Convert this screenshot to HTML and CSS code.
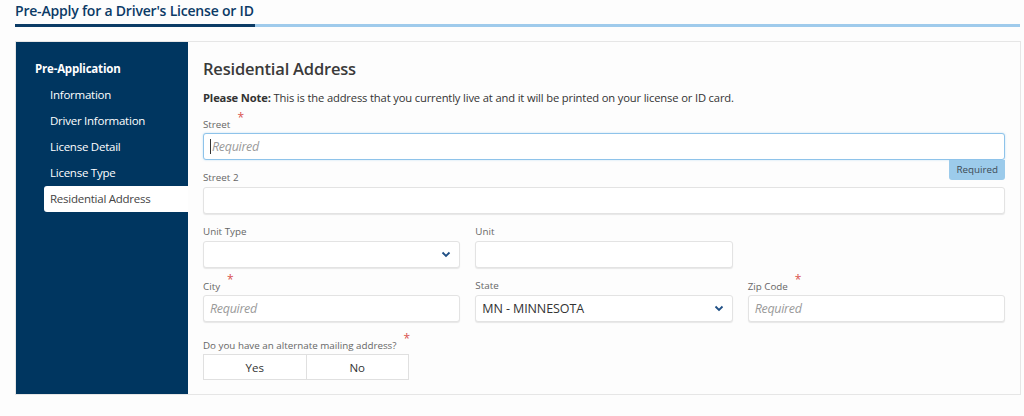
FILE: index.html
```html
<!DOCTYPE html>
<html lang="en">
<head>
<meta charset="utf-8">
<title>Pre-Apply for a Driver's License or ID</title>
<link rel="stylesheet" href="styles.css">
</head>
<body>
<header class="page-head">
  <h1 class="page-title">Pre-Apply for a Driver's License or ID</h1>
  <div class="title-rule"><span class="rule-dark"></span><span class="rule-light"></span></div>
</header>
<div class="card">
  <nav class="sidebar">
    <div class="side-group">Pre-Application</div>
    <ul class="side-list">
      <li class="side-item">Information</li>
      <li class="side-item">Driver Information</li>
      <li class="side-item">License Detail</li>
      <li class="side-item">License Type</li>
      <li class="side-item active">Residential Address</li>
    </ul>
  </nav>
  <main class="main">
    <h2 class="section-title">Residential Address</h2>
    <p class="note"><b>Please Note:</b> This is the address that you currently live at and it will be printed on your license or ID card.</p>

    <div class="field">
      <label class="label">Street<span class="req">*</span></label>
      <div class="input focused"><span class="caret"></span><span class="ph">Required</span></div>
      <span class="tip">Required</span>
    </div>

    <div class="field">
      <label class="label">Street 2</label>
      <div class="input"></div>
    </div>

    <div class="row">
      <div class="field">
        <label class="label">Unit Type</label>
        <div class="input select"><span class="val"></span>
          <svg class="chev" width="10" height="7" viewBox="0 0 10 7"><path d="M1.5 1.5 L5 5 L8.5 1.5" fill="none" stroke="#1f4f85" stroke-width="1.8"/></svg>
        </div>
      </div>
      <div class="field">
        <label class="label">Unit</label>
        <div class="input"></div>
      </div>
      <div class="field"></div>
    </div>

    <div class="row">
      <div class="field">
        <label class="label">City<span class="req">*</span></label>
        <div class="input"><span class="ph">Required</span></div>
      </div>
      <div class="field">
        <label class="label">State</label>
        <div class="input select"><span class="val">MN - MINNESOTA</span>
          <svg class="chev" width="10" height="7" viewBox="0 0 10 7"><path d="M1.5 1.5 L5 5 L8.5 1.5" fill="none" stroke="#1f4f85" stroke-width="1.8"/></svg>
        </div>
      </div>
      <div class="field">
        <label class="label">Zip Code<span class="req">*</span></label>
        <div class="input"><span class="ph">Required</span></div>
      </div>
    </div>

    <div class="field question">
      <label class="label">Do you have an alternate mailing address?<span class="req">*</span></label>
      <div class="toggle"><span class="opt">Yes</span><span class="opt">No</span></div>
    </div>
  </main>
</div>
</body>
</html>
```

FILE: styles.css
```css
* { box-sizing: border-box; }
html, body { margin: 0; padding: 0; }
body {
  background: #fdfdfd;
  font-family: "Open Sans", "Noto Sans", sans-serif;
  color: #333;
  width: 1024px;
  height: 416px;
  overflow: hidden;
}
.page-head { padding: 0 4px 0 15px; }
.page-title {
  margin: 0;
  padding-top: 1px;
  font-size: 14px;
  font-weight: 600;
  color: #0b3a66;
  line-height: 20px;
  letter-spacing: -0.2px;
}
.title-rule { display: flex; height: 3px; margin-top: 3px; }
.rule-dark { width: 240px; background: #0c3c66; }
.rule-light { flex: 1; background: #9fcbec; }

.card {
  margin: 14px 3px 0 15px;
  display: flex;
  border: 1px solid #e6e6e6;
  height: 354px;
  background: #fdfdfd;
}
.sidebar {
  width: 172px;
  flex: none;
  background: #003660;
  padding-top: 18px;
}
.side-group {
  color: #fff;
  font-weight: 700;
  font-size: 11.5px;
  line-height: 18px;
  padding-left: 19px;
  margin-bottom: 4px;
  letter-spacing: -0.2px;
}
.side-list { list-style: none; margin: 0; padding: 0 0 0 28px; }
.side-item {
  color: #fff;
  font-size: 11.5px;
  line-height: 26px;
  height: 26px;
  padding-left: 6px;
  letter-spacing: -0.25px;
}
.side-item.active {
  background: #fff;
  color: #444;
  border-radius: 3px 0 0 3px;
}

.main { flex: 1; padding: 15px 15px 0 15px; }
.section-title {
  margin: 0;
  font-size: 16.5px;
  font-weight: 600;
  color: #3a3a3a;
  line-height: 24px;
  letter-spacing: -0.2px;
}
.note {
  margin: 9px 0 10px;
  font-size: 11.2px;
  line-height: 16px;
  color: #333;
  letter-spacing: -0.15px;
}
.note b { font-weight: 700; }

.field { position: relative; margin-bottom: 10px; }
.row { display: grid; grid-template-columns: repeat(3, 1fr); gap: 15px; }
.label {
  display: block;
  height: 17px;
  line-height: 15px;
  font-size: 9.8px;
  color: #666;
}
.req {
  color: #d9534f;
  font-size: 12px;
  position: relative;
  top: -6px;
  margin-left: 7px;
}
.input {
  height: 27px;
  background: #fff;
  border: 1px solid #e3e3e3;
  border-radius: 3px;
  box-shadow: 0 1px 1px rgba(0,0,0,0.09);
  display: flex;
  align-items: center;
  padding: 0 6px;
  position: relative;
}
.input.focused { border-color: #8ec3ea; box-shadow: 0 0 2px rgba(142,195,234,0.6); }
.caret { width: 1px; height: 15px; background: #333; margin-right: 1px; }
.ph { font-style: italic; color: #9a9a9a; font-size: 12.5px; letter-spacing: -0.3px; }
.select { justify-content: space-between; }
.val { font-size: 12.5px; color: #333; letter-spacing: -0.1px; }
.chev { margin-right: 2px; }
.tip {
  position: absolute;
  right: 0;
  top: 44px;
  background: #9ccbeb;
  color: #3d4a55;
  font-size: 9.8px;
  line-height: 20px;
  height: 20px;
  padding: 0 7px;
  border-radius: 0 0 3px 3px;
}
.question { margin-top: 5px; }
.toggle { display: flex; width: 206px; height: 26px; border: 1px solid #e0e0e0; background: #fff; }
.opt {
  flex: 1;
  display: flex;
  align-items: center;
  justify-content: center;
  font-size: 11.5px;
  color: #333;
}
.opt + .opt { border-left: 1px solid #e0e0e0; }
```
